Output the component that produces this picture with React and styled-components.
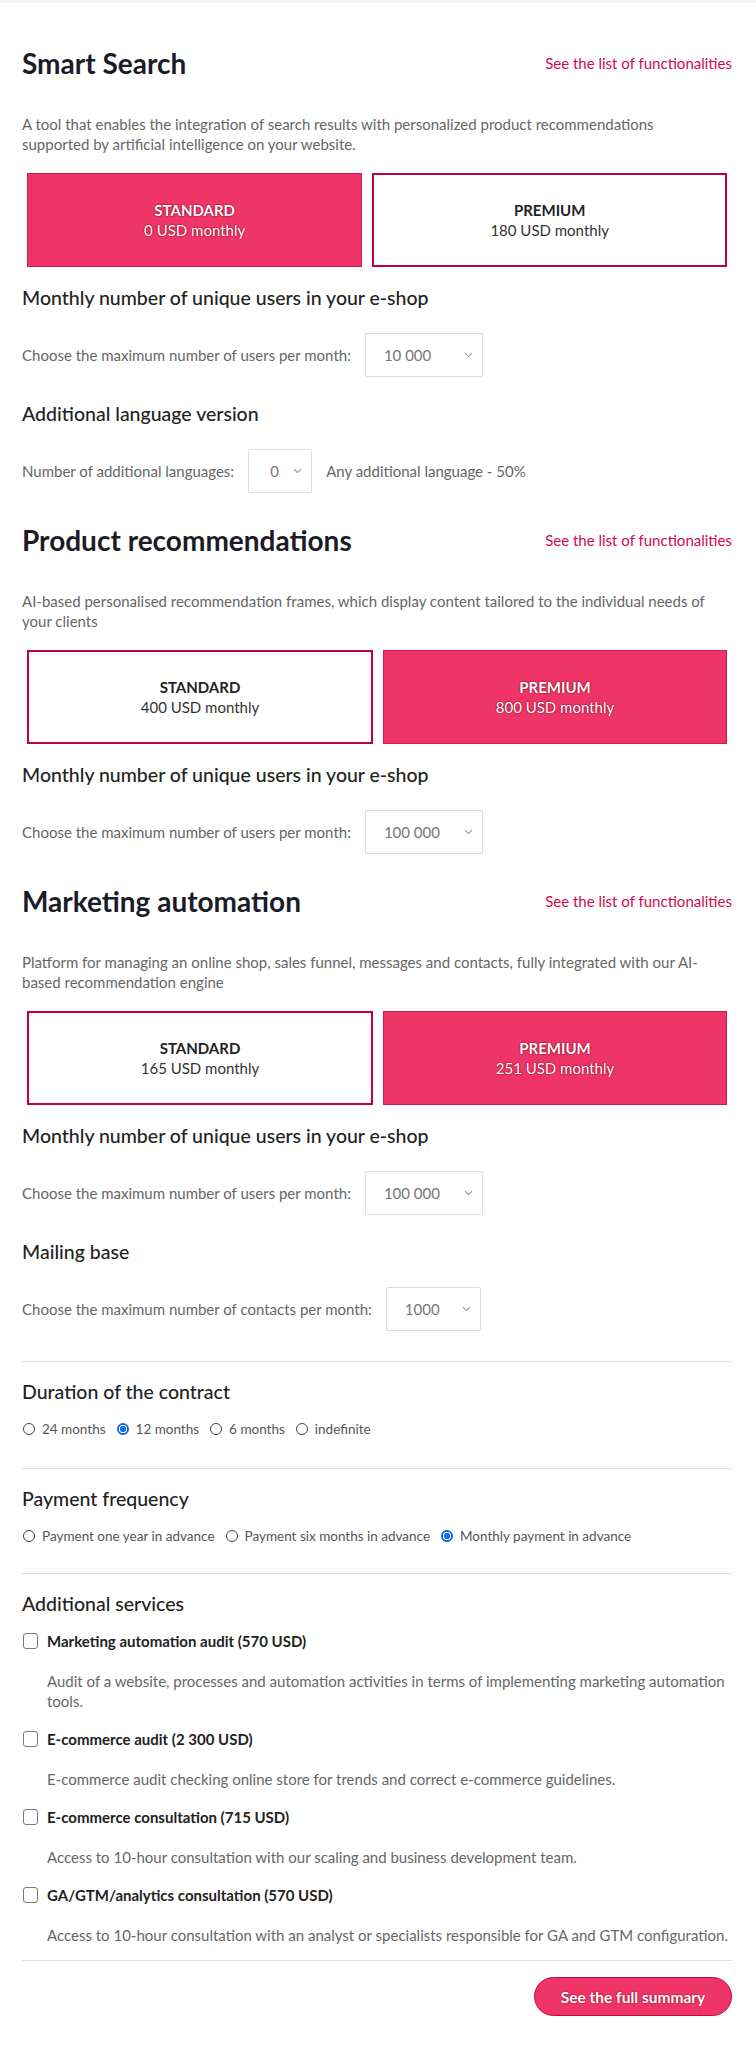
import React, { useState } from 'react'
import styled, { createGlobalStyle } from 'styled-components'
import { ChevronDown } from 'lucide-react'

const GlobalStyle = createGlobalStyle`
  body {
    margin: 0;
    background: #fff;
    font-family: Lato, 'Noto Sans', sans-serif;
    color: #555;
  }
  * { box-sizing: border-box; }
`

const TopShade = styled('div')`
  height: 3px;
  background: #f4f4f4;
`

const Page = styled('div')`
  padding: 44px 24px 38px 22px;
`

const Section = styled('section')`
  & + & {
    margin-top: 31px;
  }
`

const SectionHeader = styled('div')`
  display: flex;
  align-items: center;
  justify-content: space-between;
  height: 32px;
`

const SectionTitle = styled('h2')`
  margin: 0;
  font-size: 28px;
  line-height: 32px;
  font-weight: 700;
  color: #1b1c27;
`

const FunctionsLink = styled('a')`
  font-size: 15px;
  color: #d20a4b;
  text-decoration: none;
  cursor: pointer;
`

const Description = styled('p')`
  margin: 35px 0 0;
  max-width: 700px;
  font-size: 15px;
  line-height: 20px;
  color: #666;
`

const PlanRow = styled('div')`
  display: flex;
  gap: 10px;
  margin: 19px 5px 0;
`

const PlanCard = styled('button')`
  flex: 1 1 auto;
  height: 94px;
  display: flex;
  flex-direction: column;
  align-items: center;
  justify-content: center;
  font-family: inherit;
  font-size: 15px;
  line-height: 20px;
  cursor: pointer;
  background: ${props => props.active ? '#ef3567' : '#fff'};
  border: ${props => props.active ? '1px solid #cf1b4f' : '2px solid #bf0039'};
  color: ${props => props.active ? '#fff' : '#333'};
  text-shadow: ${props => props.active ? '0 0 2px #8c0628, 0 0 1px #8c0628' : 'none'};
`

const PlanName = styled('span')`
  font-weight: 700;
  text-transform: uppercase;
  color: ${props => props.active ? '#fff' : '#222'};
`

const SubTitle = styled('h3')`
  margin: ${props => props.first ? '18px' : '24px'} 0 0;
  font-size: 19.5px;
  line-height: 26px;
  font-weight: 500;
  color: #222;
`

const FieldRow = styled('div')`
  display: flex;
  align-items: center;
  gap: 14px;
  margin-top: 22px;
  font-size: 15px;
  color: #666;
`

const SelectWrap = styled('div')`
  position: relative;
  width: ${props => props.width}px;
  height: 44px;
`

const Select = styled('select')`
  appearance: none;
  width: 100%;
  height: 100%;
  padding: 0 0 0 ${props => props.pad || 18}px;
  border: 1px solid #dcdcdc;
  border-radius: 2px;
  background: #fff;
  font-family: inherit;
  font-size: 15px;
  color: #777;
  outline: none;
`

const SelectArrow = styled(ChevronDown)`
  position: absolute;
  right: 8px;
  top: 50%;
  transform: translateY(-50%);
  pointer-events: none;
  color: #999;
`

const Divider = styled('hr')`
  margin: ${props => props.top || 30}px 0 0;
  border: 0;
  border-top: 1px solid #dedede;
`

const OptionBlock = styled('div')`
  margin-top: 17px;
`

const OptionTitle = styled('div')`
  font-size: 19.5px;
  line-height: 26px;
  font-weight: 500;
  color: #222;
`

const RadioRow = styled('div')`
  display: flex;
  align-items: center;
  margin-top: 14px;
  height: 20px;
  font-size: 13.5px;
  color: #555;
`

const RadioLabel = styled('label')`
  display: flex;
  align-items: center;
  gap: 7px;
  margin-right: 10px;
  cursor: pointer;
`

const Radio = styled('input')`
  appearance: none;
  margin: 0 0 0 1px;
  width: 12px;
  height: 12px;
  border-radius: 50%;
  border: 1px solid #444;
  background: #fff;
  &:checked {
    border-color: #0a63d9;
    background: radial-gradient(circle, #1374e8 0 3px, #fff 3.5px 4px, #0a63d9 4.5px);
  }
`

const ServiceItem = styled('div')`
  margin-top: ${props => props.first ? '13px' : '17px'};
`

const CheckLabel = styled('label')`
  display: flex;
  align-items: center;
  gap: 9px;
  height: 22px;
  font-size: 15px;
  font-weight: 700;
  color: #222;
  cursor: pointer;
`

const Checkbox = styled('input')`
  appearance: none;
  margin: 0 0 0 1px;
  width: 15px;
  height: 16px;
  border: 1px solid #7a7a7a;
  border-radius: 3px;
  background: #fff;
`

const ServiceText = styled('p')`
  margin: 19px 0 0 25px;
  font-size: 15px;
  line-height: 20px;
  color: #666;
`

const Footer = styled('div')`
  display: flex;
  justify-content: flex-end;
  margin-top: 16px;
`

const SummaryButton = styled('button')`
  height: 39px;
  padding: 0 20px;
  min-width: 198px;
  border-radius: 20px;
  border: 1px solid #c3093f;
  background: #ef3567;
  color: #fff;
  font-family: inherit;
  font-size: 15.5px;
  font-weight: 700;
  text-shadow: 0 0 2px #8c0628;
  cursor: pointer;
`

const products = [
  {
    title: 'Smart Search',
    text: 'A tool that enables the integration of search results with personalized product recommendations supported by artificial intelligence on your website.',
    plans: [['Standard', '0 USD monthly'], ['Premium', '180 USD monthly']],
    active: 0,
    fields: [
      { title: 'Monthly number of unique users in your e-shop', label: 'Choose the maximum number of users per month:', value: '10 000', width: 118 },
      { title: 'Additional language version', label: 'Number of additional languages:', value: '0', width: 64, pad: 21, note: 'Any additional language - 50%' }
    ]
  },
  {
    title: 'Product recommendations',
    text: 'AI-based personalised recommendation frames, which display content tailored to the individual needs of your clients',
    plans: [['Standard', '400 USD monthly'], ['Premium', '800 USD monthly']],
    active: 1,
    fields: [
      { title: 'Monthly number of unique users in your e-shop', label: 'Choose the maximum number of users per month:', value: '100 000', width: 118 }
    ]
  },
  {
    title: 'Marketing automation',
    text: 'Platform for managing an online shop, sales funnel, messages and contacts, fully integrated with our AI-based recommendation engine',
    plans: [['Standard', '165 USD monthly'], ['Premium', '251 USD monthly']],
    active: 1,
    fields: [
      { title: 'Monthly number of unique users in your e-shop', label: 'Choose the maximum number of users per month:', value: '100 000', width: 118 },
      { title: 'Mailing base', label: 'Choose the maximum number of contacts per month:', value: '1000', width: 95 }
    ]
  }
]

const services = [
  ['Marketing automation audit (570 USD)', 'Audit of a website, processes and automation activities in terms of implementing marketing automation tools.'],
  ['E-commerce audit (2 300 USD)', 'E-commerce audit checking online store for trends and correct e-commerce guidelines.'],
  ['E-commerce consultation (715 USD)', 'Access to 10-hour consultation with our scaling and business development team.'],
  ['GA/GTM/analytics consultation (570 USD)', 'Access to 10-hour consultation with an analyst or specialists responsible for GA and GTM configuration.']
]

const ProductSection = ({ product }) => {
  const [active, setActive] = useState(product.active)
  return (
    <Section>
      <SectionHeader>
        <SectionTitle>{product.title}</SectionTitle>
        <FunctionsLink>See the list of functionalities</FunctionsLink>
      </SectionHeader>
      <Description>{product.text}</Description>
      <PlanRow>
        {product.plans.map(([name, price], i) => (
          <PlanCard key={name} active={active === i} onClick={() => setActive(i)}>
            <PlanName active={active === i}>{name}</PlanName>
            <span>{price}</span>
          </PlanCard>
        ))}
      </PlanRow>
      {product.fields.map((field, i) => (
        <div key={field.title}>
          <SubTitle first={i === 0}>{field.title}</SubTitle>
          <FieldRow>
            <span>{field.label}</span>
            <SelectWrap width={field.width}>
              <Select pad={field.pad} defaultValue={field.value}>
                <option>{field.value}</option>
              </Select>
              <SelectArrow size={13} strokeWidth={2} />
            </SelectWrap>
            {field.note && <span>{field.note}</span>}
          </FieldRow>
        </div>
      ))}
    </Section>
  )
}

const RadioGroup = ({ name, options, checked }) => (
  <RadioRow>
    {options.map((option, i) => (
      <RadioLabel key={option}>
        <Radio type='radio' name={name} defaultChecked={i === checked} />
        {option}
      </RadioLabel>
    ))}
  </RadioRow>
)

const App = () => {
  return (
    <>
      <GlobalStyle />
      <TopShade />
      <Page>
        {products.map(product => (
          <ProductSection key={product.title} product={product} />
        ))}
        <Divider />
        <OptionBlock>
          <OptionTitle>Duration of the contract</OptionTitle>
          <RadioGroup name='duration' options={['24 months', '12 months', '6 months', 'indefinite']} checked={1} />
        </OptionBlock>
        <Divider top={29} />
        <OptionBlock>
          <OptionTitle>Payment frequency</OptionTitle>
          <RadioGroup name='payment' options={['Payment one year in advance', 'Payment six months in advance', 'Monthly payment in advance']} checked={2} />
        </OptionBlock>
        <Divider top={27} />
        <OptionBlock>
          <OptionTitle>Additional services</OptionTitle>
          {services.map(([label, text], i) => (
            <ServiceItem key={label} first={i === 0}>
              <CheckLabel>
                <Checkbox type='checkbox' />
                {label}
              </CheckLabel>
              <ServiceText>{text}</ServiceText>
            </ServiceItem>
          ))}
        </OptionBlock>
        <Divider top={15} />
        <Footer>
          <SummaryButton>See the full summary</SummaryButton>
        </Footer>
      </Page>
    </>
  )
}

export default App
